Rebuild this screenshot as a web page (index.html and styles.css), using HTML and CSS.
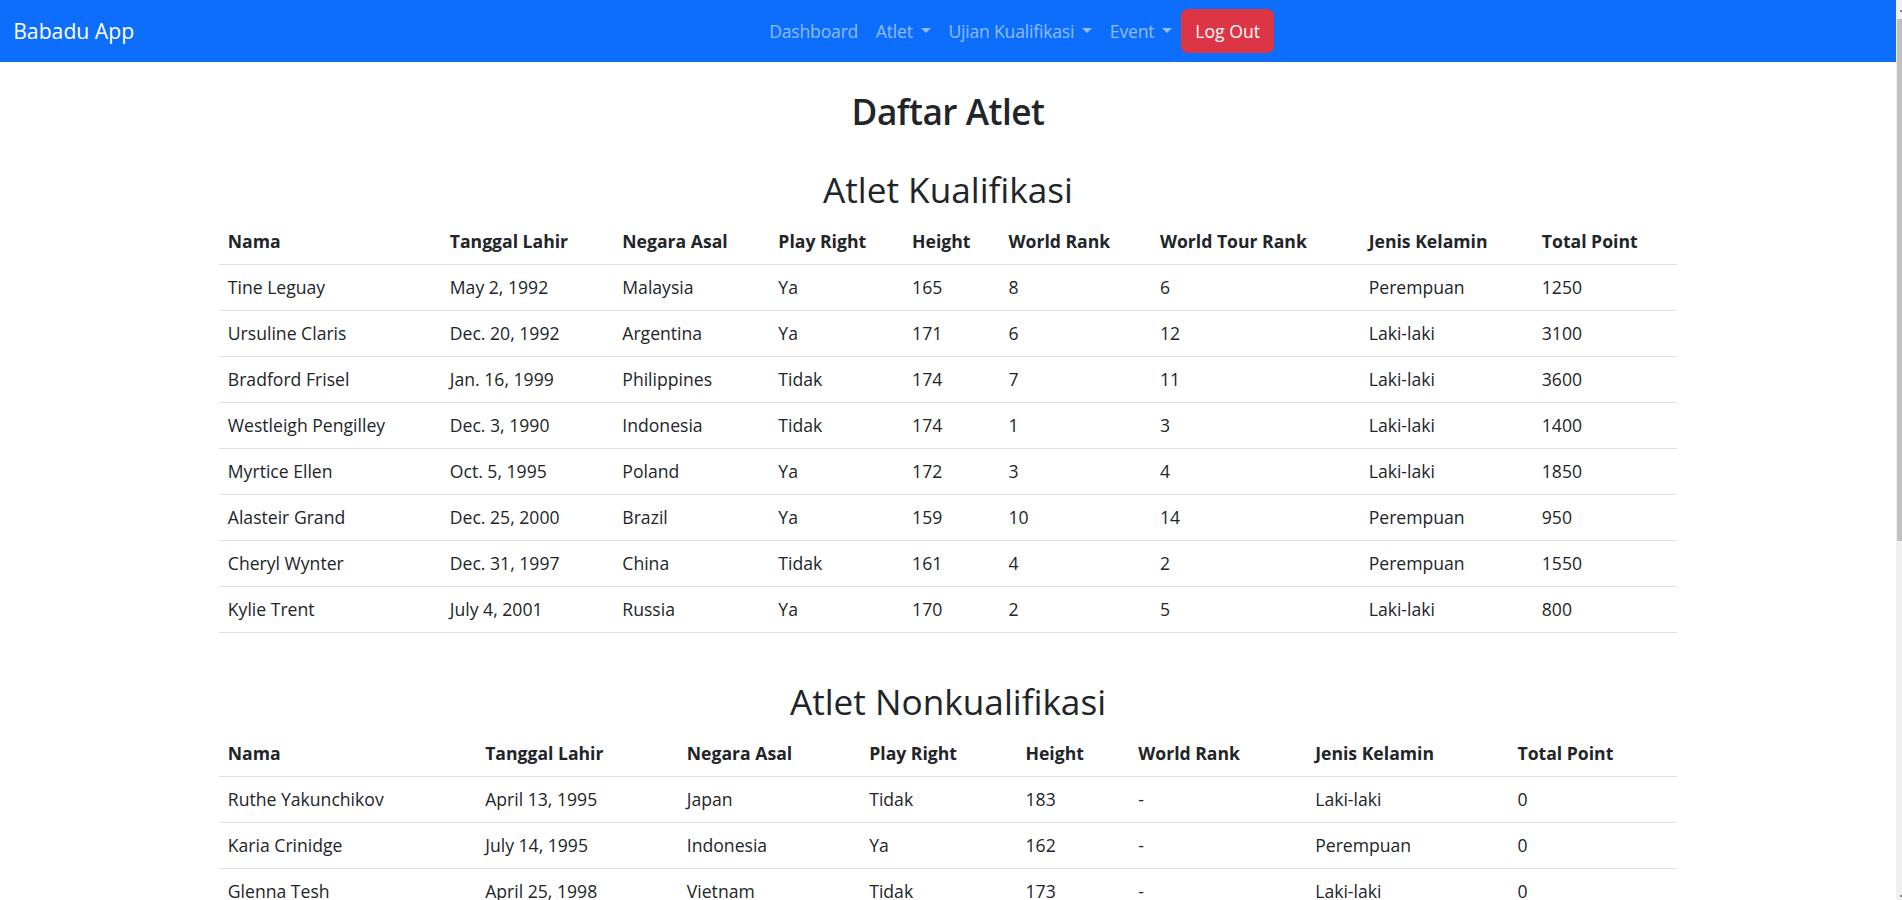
FILE: index.html
```html
<!DOCTYPE html>
<html lang="id">
<head>
<meta charset="utf-8">
<title>Daftar Atlet - Babadu App</title>
<link rel="stylesheet" href="styles.css">
</head>
<body>
<div class="page">
<nav class="navbar">
  <a class="brand" href="#">Babadu App</a>
  <div class="nav-collapse">
    <ul class="nav">
      <li><a class="nav-link" href="#">Dashboard</a></li>
      <li><a class="nav-link dropdown" href="#">Atlet</a></li>
      <li><a class="nav-link dropdown" href="#">Ujian Kualifikasi</a></li>
      <li><a class="nav-link dropdown" href="#">Event</a></li>
      <li><a class="btn-logout" href="#">Log Out</a></li>
    </ul>
  </div>
</nav>

<main class="container">
  <h2 class="page-title">Daftar Atlet</h2>

  <section class="section">
    <h2 class="section-title">Atlet Kualifikasi</h2>
    <table class="table">
      <thead>
        <tr><th>Nama</th><th>Tanggal Lahir</th><th>Negara Asal</th><th>Play Right</th><th>Height</th><th>World Rank</th><th>World Tour Rank</th><th>Jenis Kelamin</th><th>Total Point</th></tr>
      </thead>
      <tbody>
        <tr><td>Tine Leguay</td><td>May 2, 1992</td><td>Malaysia</td><td>Ya</td><td>165</td><td>8</td><td>6</td><td>Perempuan</td><td>1250</td></tr>
        <tr><td>Ursuline Claris</td><td>Dec. 20, 1992</td><td>Argentina</td><td>Ya</td><td>171</td><td>6</td><td>12</td><td>Laki-laki</td><td>3100</td></tr>
        <tr><td>Bradford Frisel</td><td>Jan. 16, 1999</td><td>Philippines</td><td>Tidak</td><td>174</td><td>7</td><td>11</td><td>Laki-laki</td><td>3600</td></tr>
        <tr><td>Westleigh Pengilley</td><td>Dec. 3, 1990</td><td>Indonesia</td><td>Tidak</td><td>174</td><td>1</td><td>3</td><td>Laki-laki</td><td>1400</td></tr>
        <tr><td>Myrtice Ellen</td><td>Oct. 5, 1995</td><td>Poland</td><td>Ya</td><td>172</td><td>3</td><td>4</td><td>Laki-laki</td><td>1850</td></tr>
        <tr><td>Alasteir Grand</td><td>Dec. 25, 2000</td><td>Brazil</td><td>Ya</td><td>159</td><td>10</td><td>14</td><td>Perempuan</td><td>950</td></tr>
        <tr><td>Cheryl Wynter</td><td>Dec. 31, 1997</td><td>China</td><td>Tidak</td><td>161</td><td>4</td><td>2</td><td>Perempuan</td><td>1550</td></tr>
        <tr><td>Kylie Trent</td><td>July 4, 2001</td><td>Russia</td><td>Ya</td><td>170</td><td>2</td><td>5</td><td>Laki-laki</td><td>800</td></tr>
      </tbody>
    </table>
  </section>

  <section class="section section-gap">
    <h2 class="section-title">Atlet Nonkualifikasi</h2>
    <table class="table">
      <thead>
        <tr><th>Nama</th><th>Tanggal Lahir</th><th>Negara Asal</th><th>Play Right</th><th>Height</th><th>World Rank</th><th>Jenis Kelamin</th><th>Total Point</th></tr>
      </thead>
      <tbody>
        <tr><td>Ruthe Yakunchikov</td><td>April 13, 1995</td><td>Japan</td><td>Tidak</td><td>183</td><td>-</td><td>Laki-laki</td><td>0</td></tr>
        <tr><td>Karia Crinidge</td><td>July 14, 1995</td><td>Indonesia</td><td>Ya</td><td>162</td><td>-</td><td>Perempuan</td><td>0</td></tr>
        <tr><td>Glenna Tesh</td><td>April 25, 1998</td><td>Vietnam</td><td>Tidak</td><td>173</td><td>-</td><td>Laki-laki</td><td>0</td></tr>
      </tbody>
    </table>
  </section>
</main>
</div>
<div class="scrollbar" aria-hidden="true">
  <div class="scrollbar-arrow scrollbar-arrow-up"></div>
  <div class="scrollbar-thumb"></div>
  <div class="scrollbar-arrow scrollbar-arrow-down"></div>
</div>
</body>
</html>
```

FILE: styles.css
```css
* {
  box-sizing: border-box;
}

body {
  margin: 0;
  padding-right: 6px;
  font-family: "Open Sans", "Noto Sans", sans-serif;
  font-size: 17.6px;
  line-height: 1.5;
  color: #212529;
  background: #fff;
}

a {
  text-decoration: none;
}

/* simulated thin window scrollbar */
.scrollbar {
  position: fixed;
  top: 0;
  right: 0;
  bottom: 0;
  width: 6px;
  display: flex;
  flex-direction: column;
  background: #f0f0f0;
}

.scrollbar-arrow {
  height: 19px;
  position: relative;
}

.scrollbar-arrow::after {
  content: "";
  position: absolute;
  right: 0;
  width: 2px;
  height: 2px;
  background: #8a8a8a;
}

.scrollbar-arrow-up::after {
  top: 10px;
}

.scrollbar-arrow-down {
  margin-top: auto;
}

.scrollbar-arrow-down::after {
  bottom: 3px;
}

.scrollbar-thumb {
  height: 522px;
  margin-left: 1px;
  background: #c1c1c1;
}

.navbar {
  display: flex;
  align-items: center;
  height: 61.6px;
  padding: 0 13.2px;
  background: #0d6efd;
}

.brand {
  color: #fff;
  font-size: 21.2px;
  line-height: 1.5;
  margin-right: 17.6px;
  padding: 5.5px 0;
}

.nav-collapse {
  flex: 1;
  display: flex;
}

.nav {
  display: flex;
  align-items: center;
  list-style: none;
  margin: 0 auto;
  padding: 0;
}

.nav-link {
  display: block;
  padding: 8.8px;
  color: rgba(255, 255, 255, 0.55);
  letter-spacing: -0.2px;
}

.dropdown::after {
  content: "";
  display: inline-block;
  margin-left: 8px;
  vertical-align: 4.5px;
  border-top: 5.3px solid;
  border-right: 5.3px solid transparent;
  border-left: 5.3px solid transparent;
  border-bottom: 0;
}

.btn-logout {
  display: inline-block;
  margin-left: 0;
  padding: 7.6px 13.2px;
  line-height: 1.5;
  color: #fff;
  background: #dc3545;
  border: 1px solid #dc3545;
  border-radius: 6.6px;
}

.container {
  width: 1458px;
  margin: 0 auto;
  padding: 28px 0 40px;
}

.page-title,
.section-title {
  margin: 0 0 8.8px;
  font-size: 35.2px;
  line-height: 1.2;
  text-align: center;
}

.page-title {
  font-weight: 600;
  letter-spacing: -0.5px;
}

.section-title {
  font-weight: 400;
}

.section {
  margin-top: 36px;
}

.section-gap {
  margin-top: 47px;
}

.table {
  width: 100%;
  border-collapse: collapse;
  margin-bottom: 17.6px;
}

.table th,
.table td {
  padding: 9.3px 8.8px;
  text-align: left;
  vertical-align: top;
  border-bottom: 1px solid #dee2e6;
  line-height: 1.5;
}

.table th {
  font-weight: 700;
}
```
